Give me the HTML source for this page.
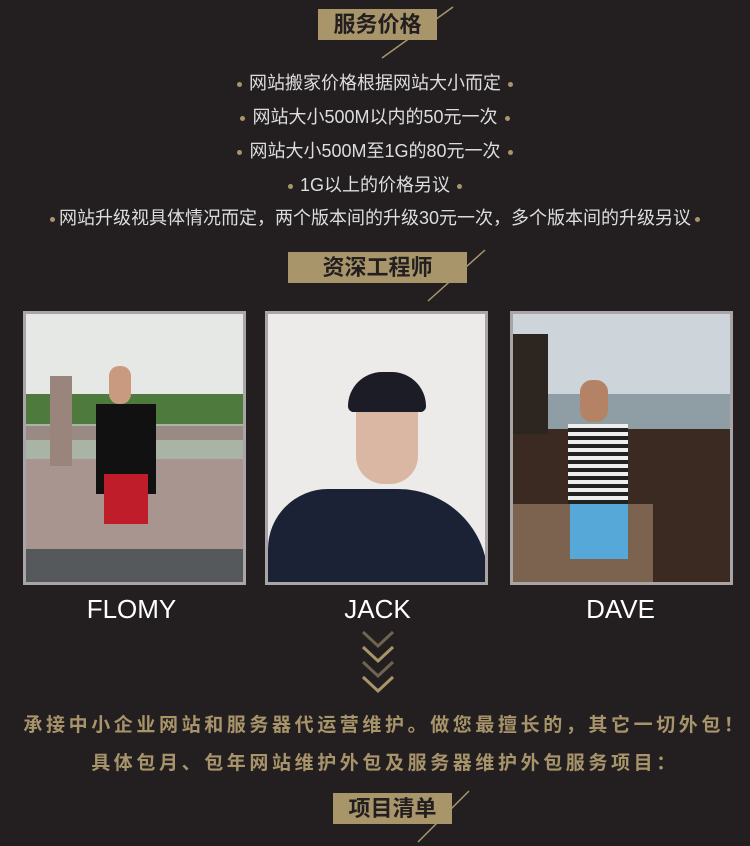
<!DOCTYPE html>
<html><head><meta charset="utf-8"><style>
*{margin:0;padding:0;box-sizing:border-box}
body{width:750px;height:846px;background:#231f20;position:relative;overflow:hidden;font-family:"Liberation Sans","Noto Sans CJK SC",sans-serif}
.tt{position:absolute;background:#a8966a;color:#231f20;font-size:22px;font-weight:bold;text-align:center;line-height:31px;letter-spacing:0px}
.li{position:absolute;left:0;width:750px;text-align:center;color:#ddd;font-size:18px;line-height:22px}
.d{display:inline-block;width:5px;height:5px;border-radius:50%;background:#a8966a;vertical-align:middle;margin:0 7px}
.ph{position:absolute;top:311px;width:223px;height:274px;border:3px solid #a9a5a6;overflow:hidden}
.ph div{position:absolute}
.nm{position:absolute;top:594px;width:223px;text-align:center;color:#fff;font-size:26px}
.g{position:absolute;left:0;width:750px;text-align:center;color:#a8946a;font-size:19px;font-weight:bold;letter-spacing:3.6px;text-indent:20px}
</style></head><body>
<svg width="750" height="846" style="position:absolute;left:0;top:0">
<line x1="382" y1="58" x2="453" y2="7" stroke="#a8966a" stroke-width="1.5"/>
<line x1="428" y1="301" x2="485" y2="250" stroke="#a8966a" stroke-width="1.5"/>
<line x1="418" y1="842" x2="469" y2="791" stroke="#a8966a" stroke-width="1.5"/>
<g fill="none" stroke-width="3">
<polyline points="363,632 378,646 393,632" stroke="#6e6450"/>
<polyline points="363,647 378,661 393,647" stroke="#a8966a"/>
<polyline points="363,662 378,676 393,662" stroke="#6e6450"/>
<polyline points="363,677 378,691 393,677" stroke="#a8966a"/>
</g>
</svg>
<div class="tt" style="left:318px;top:9px;width:119px">服务价格</div>
<div class="li" style="top:72px"><span class="d"></span>网站搬家价格根据网站大小而定<span class="d"></span></div>
<div class="li" style="top:106px"><span class="d"></span>网站大小500M以内的50元一次<span class="d"></span></div>
<div class="li" style="top:140px"><span class="d"></span>网站大小500M至1G的80元一次<span class="d"></span></div>
<div class="li" style="top:174px"><span class="d"></span>1G以上的价格另议<span class="d"></span></div>
<div class="li" style="top:207px"><span class="d" style="margin:0 4px"></span>网站升级视具体情况而定，两个版本间的升级30元一次，多个版本间的升级另议<span class="d" style="margin:0 4px"></span></div>
<div class="tt" style="left:288px;top:252px;width:179px">资深工程师</div>

<div class="ph" style="left:23px;background:#e6e8e6">
<div style="left:0;top:80px;width:220px;height:30px;background:#4f7a3e"></div>
<div style="left:0;top:110px;width:220px;height:60px;background:#a9b4a6"></div>
<div style="left:0;top:145px;width:220px;height:130px;background:#a89590"></div>
<div style="left:0;top:235px;width:220px;height:40px;background:#55595c"></div>
<div style="left:0;top:112px;width:220px;height:14px;background:#9a8a84"></div>
<div style="left:24px;top:62px;width:22px;height:90px;background:#9a857c"></div>
<div style="left:70px;top:90px;width:60px;height:90px;background:#111"></div>
<div style="left:78px;top:160px;width:44px;height:50px;background:#c01d2a"></div>
<div style="left:83px;top:52px;width:22px;height:38px;background:#c99a80;border-radius:10px"></div>
</div>
<div class="ph" style="left:265px;background:#ecebea">
<div style="left:0;top:175px;width:220px;height:100px;background:#1b2235;border-radius:60px 90px 0 0"></div>
<div style="left:88px;top:70px;width:62px;height:100px;background:#d9b7a2;border-radius:28px"></div>
<div style="left:80px;top:58px;width:78px;height:40px;background:#1b1c26;border-radius:36px 36px 6px 6px"></div>
</div>
<div class="ph" style="left:510px;background:#cdd4da">
<div style="left:0;top:80px;width:220px;height:110px;background:#8f9da5"></div>
<div style="left:0;top:115px;width:220px;height:160px;background:#3b2a22"></div>
<div style="left:0;top:190px;width:140px;height:85px;background:#7b6350"></div>
<div style="left:0;top:20px;width:35px;height:100px;background:#2c2520"></div>
<div style="left:55px;top:110px;width:60px;height:80px;background:#e9e9ef;background-image:repeating-linear-gradient(0deg,#222 0 4px,#eee 4px 8px)"></div>
<div style="left:57px;top:190px;width:58px;height:55px;background:#55a8d8"></div>
<div style="left:67px;top:66px;width:28px;height:42px;background:#b48264;border-radius:12px"></div>
</div>
<div class="nm" style="left:20px">FLOMY</div>
<div class="nm" style="left:266px">JACK</div>
<div class="nm" style="left:509px">DAVE</div>

<div class="g" style="top:710px">承接中小企业网站和服务器代运营维护。做您最擅长的，其它一切外包！</div>
<div class="g" style="top:748px">具体包月、包年网站维护外包及服务器维护外包服务项目：</div>
<div class="tt" style="left:333px;top:793px;width:119px">项目清单</div>
</body></html>
